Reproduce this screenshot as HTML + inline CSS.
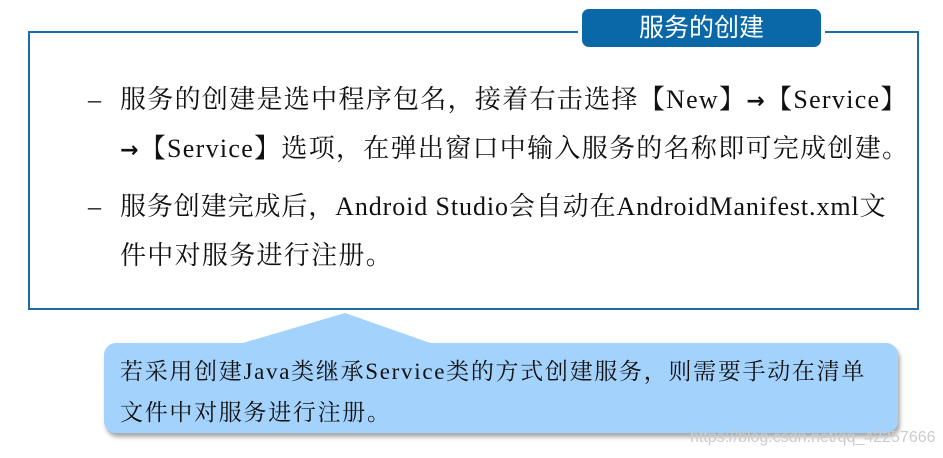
<!DOCTYPE html>
<html><head><meta charset="utf-8"><style>
body{margin:0;width:943px;height:458px;background:#fff;position:relative;overflow:hidden;font-family:"Liberation Serif","Noto Serif CJK SC",serif;color:#111}
.box{position:absolute;left:28px;top:31px;width:887px;height:275px;border:2px solid #1c6aa6;}
.title{position:absolute;left:582px;top:9px;width:239px;height:38px;background:#0a68a8;border-radius:7px;color:#fff;font-family:"Liberation Sans","Noto Sans CJK SC",sans-serif;font-size:25px;line-height:38px;text-align:center;box-shadow:0 0 0 4px #fff}
.l{position:absolute;font-size:26px;letter-spacing:1.3px;white-space:nowrap;line-height:30px}
.a{font-family:"DejaVu Sans",sans-serif;font-weight:bold;font-size:22px}
.callout{position:absolute;left:104px;top:343px;width:794px;height:90px;background:#a3d2fc;border-radius:12px;box-shadow:2px 4px 4px rgba(0,0,0,.35)}
.c{position:absolute;font-size:23px;letter-spacing:1.7px;white-space:nowrap;line-height:28px;left:120px}
.wm{position:absolute;left:690px;top:429px;font-family:"Liberation Sans",sans-serif;font-size:16px;color:#ccc}
</style></head><body>
<div class="box"></div>
<div class="title">服务的创建</div>
<div class="l" style="left:88px;top:85px">–</div>
<div class="l" style="left:120px;top:85px">服务的创建是选中程序包名，接着右击选择【New】<span class="a">→</span>【Service】</div>
<div class="l" style="left:120px;top:134px"><span class="a">→</span>【Service】选项，在弹出窗口中输入服务的名称即可完成创建。</div>
<div class="l" style="left:88px;top:192px">–</div>
<div class="l" style="left:120px;top:192px;letter-spacing:0.9px">服务创建完成后，Android Studio会自动在AndroidManifest.xml文</div>
<div class="l" style="left:120px;top:241px">件中对服务进行注册。</div>
<div class="callout"></div>
<svg style="position:absolute;left:0;top:0" width="943" height="458"><polygon points="236,345 345,313 436,345" fill="#a3d2fc"/></svg>
<div class="c" style="top:358px">若采用创建Java类继承Service类的方式创建服务，则需要手动在清单</div>
<div class="c" style="top:399px">文件中对服务进行注册。</div>
<div class="wm">https://blog.csdn.net/qq_42257666</div>
</body></html>
